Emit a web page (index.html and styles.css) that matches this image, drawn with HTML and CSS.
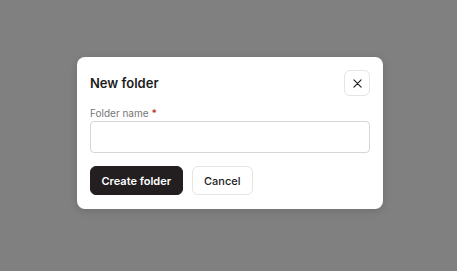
FILE: index.html
```html
<!DOCTYPE html>
<html lang="en">

<head>
    <meta charset="utf-8">
    <meta name="viewport" content="width=device-width, initial-scale=1.0">
    <title>New folder</title>
    <link rel="stylesheet" href="styles.css">
</head>

<body>
    <div class="overlay">
        <div class="dialog">
            <div class="head">
                <h2 class="title">New folder</h2>
                <button class="close" aria-label="Close">
                    <svg width="9" height="9" viewBox="0 0 10 10">
                        <path d="M1 1L9 9M9 1L1 9" stroke="#222" stroke-width="1.3" stroke-linecap="round" />
                    </svg>
                </button>
            </div>
            <label class="label" for="name">Folder name <span class="req">*</span></label>
            <input class="field" id="name" type="text">
            <div class="actions">
                <button class="btn primary">Create folder</button>
                <button class="btn">Cancel</button>
            </div>
        </div>
    </div>
</body>

</html>
```

FILE: styles.css
```css
body {
    margin: 0;
    padding: 0;
    background: #808080;
    font-family: Inter, "Noto Sans", sans-serif;
}

.overlay {
    width: 457px;
    height: 271px;
    box-sizing: border-box;
    padding-top: 57px;
    padding-left: 77px;
}

.dialog {
    width: 306px;
    height: 152px;
    box-sizing: border-box;
    padding: 13px;
    background: #ffffff;
    border-radius: 8px;
    box-shadow: 0 2px 8px rgba(0, 0, 0, 0.15);
}

.head {
    display: flex;
    justify-content: space-between;
    align-items: center;
    height: 26px;
}

.title {
    margin: 0;
    font-size: 13px;
    font-weight: 600;
    color: #1c1c1c;
}

.close {
    width: 26px;
    height: 26px;
    padding: 0;
    display: flex;
    align-items: center;
    justify-content: center;
    background: #fff;
    border: 1px solid #e4e4e4;
    border-radius: 6px;
}

.label {
    display: block;
    margin-top: 11px;
    font-size: 10px;
    line-height: 13px;
    color: #777;
}

.req {
    color: #c0392b;
    font-weight: 600;
}

.field {
    display: block;
    width: 280px;
    height: 32px;
    margin-top: 1px;
    box-sizing: border-box;
    border: 1px solid #d6d6d6;
    border-radius: 4px;
    background: #fff;
}

.actions {
    display: flex;
    gap: 9px;
    margin-top: 13px;
}

.btn {
    height: 29px;
    padding: 0 11.5px;
    white-space: nowrap;
    font-family: Inter, "Noto Sans", sans-serif;
    font-size: 11px;
    font-weight: 500;
    color: #1c1c1c;
    background: #fff;
    border: 1px solid #e4e4e4;
    border-radius: 6px;
}

.primary {
    padding: 0 10.5px;
    background: #231f20;
    border-color: #231f20;
    color: #fff;
    font-weight: 600;
}
```
